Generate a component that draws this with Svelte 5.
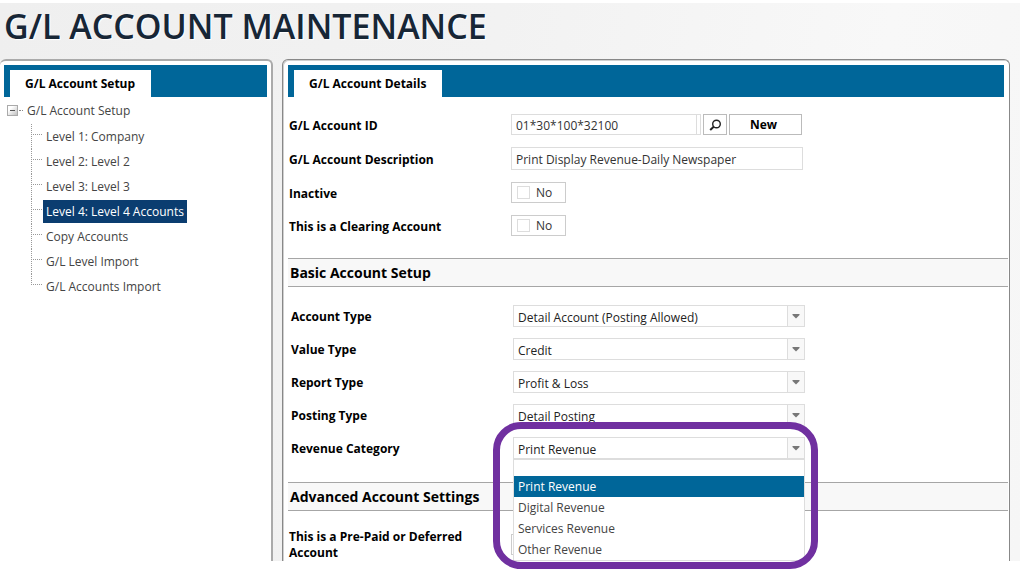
<script>
  const treeItems = [
    'Level 1: Company',
    'Level 2: Level 2',
    'Level 3: Level 3',
    'Level 4: Level 4 Accounts',
    'Copy Accounts',
    'G/L Level Import',
    'G/L Accounts Import'
  ];
  let activeItem = $state('Level 4: Level 4 Accounts');

  let accountId = $state('01*30*100*32100');
  let description = $state('Print Display Revenue-Daily Newspaper');
  let inactive = $state(false);
  let clearing = $state(false);
  let prepaid = $state(false);

  const selects = [
    { id: 'account-type', label: 'Account Type', options: ['Detail Account (Posting Allowed)'] },
    { id: 'value-type', label: 'Value Type', options: ['Credit', 'Debit'] },
    { id: 'report-type', label: 'Report Type', options: ['Profit & Loss', 'Balance Sheet'] },
    { id: 'posting-type', label: 'Posting Type', options: ['Detail Posting', 'Summary Posting'] }
  ];

  const categories = ['Print Revenue', 'Digital Revenue', 'Services Revenue', 'Other Revenue'];
  let category = $state('Print Revenue');
</script>

{#snippet arrow()}
  <span class="arrow" aria-hidden="true">
    <svg width="8" height="5" viewBox="0 0 8 5"><path d="M0.5 0h7v1L4 4.5 0.5 1z" fill="#777" /></svg>
  </span>
{/snippet}

<main class="screen">
  <h1>G/L ACCOUNT MAINTENANCE</h1>

  <div class="panels">
    <section class="panel side">
      <div class="band"><h2 class="tab">G/L Account Setup</h2></div>
      <nav class="tree">
        <div class="root">
          <button class="toggle" aria-label="Collapse">
            <svg width="12" height="12" viewBox="0 0 12 12">
              <defs>
                <linearGradient id="toggle-fill" x1="0" y1="0" x2="1" y2="1">
                  <stop offset="0.3" stop-color="#fff" /><stop offset="1" stop-color="#bbb" />
                </linearGradient>
              </defs>
              <rect x="0.5" y="0.5" width="10" height="10" fill="url(#toggle-fill)" stroke="#aaa" />
              <path d="M3 5.5h5" stroke="#555" />
            </svg>
          </button>
          <span class="dots"></span>
          <a href="#setup">G/L Account Setup</a>
        </div>
        <ul>
          {#each treeItems as item}
            <li>
              <a href="#item" class:active={item === activeItem} onclick={() => (activeItem = item)}>{item}</a>
            </li>
          {/each}
        </ul>
      </nav>
    </section>

    <section class="panel details">
      <div class="band"><h2 class="tab">G/L Account Details</h2></div>

      <div class="fields general">
        <div class="row">
          <label for="account-id">G/L Account ID</label>
          <div class="control lookup">
            <div class="id-box"><input id="account-id" type="text" bind:value={accountId} /></div>
            <button class="search" aria-label="Search">
              <svg width="13" height="12" viewBox="0 0 13 12" fill="none" stroke="#222">
                <circle cx="7.5" cy="5" r="3.8" stroke-width="1.4" />
                <path d="M4.7 7.8 1.2 11" stroke-width="2" />
              </svg>
            </button>
            <button class="new">New</button>
          </div>
        </div>
        <div class="row">
          <label for="description">G/L Account Description</label>
          <div class="control"><input id="description" class="description" type="text" bind:value={description} /></div>
        </div>
        <div class="row">
          <label for="inactive">Inactive</label>
          <label class="check"><input id="inactive" type="checkbox" bind:checked={inactive} />{inactive ? 'Yes' : 'No'}</label>
        </div>
        <div class="row">
          <label for="clearing">This is a Clearing Account</label>
          <label class="check"><input id="clearing" type="checkbox" bind:checked={clearing} />{clearing ? 'Yes' : 'No'}</label>
        </div>
      </div>

      <h3>Basic Account Setup</h3>
      <div class="fields basic">
        {#each selects as field}
          <div class="row">
            <label for={field.id}>{field.label}</label>
            <div class="control combo">
              <select id={field.id}>
                {#each field.options as option}<option>{option}</option>{/each}
              </select>
              {@render arrow()}
            </div>
          </div>
        {/each}
        <div class="row">
          <label for="category">Revenue Category</label>
          <div class="control combo">
            <select id="category" bind:value={category}>
              {#each categories as option}<option>{option}</option>{/each}
            </select>
            {@render arrow()}
            <ul class="menu" role="listbox" aria-label="Revenue Category">
              {#each categories as option}
                <li role="option" aria-selected={option === category}>{option}</li>
              {/each}
            </ul>
            <div class="highlight"></div>
          </div>
        </div>
      </div>

      <h3>Advanced Account Settings</h3>
      <div class="fields advanced">
        <div class="row">
          <label for="prepaid">This is a Pre-Paid or Deferred Account</label>
          <span class="check"><input id="prepaid" type="checkbox" bind:checked={prepaid} /></span>
        </div>
      </div>
    </section>
  </div>
</main>

<style>
  :global(body) {
    background: #fff;
  }
  .screen,
  .screen * {
    box-sizing: border-box;
  }
  .screen {
    margin: 3px 3px 16px 0;
    background: linear-gradient(100deg, #efefef 0%, #f2f2f2 45%, #f8f8f8 80%, #f6f6f6 100%);
    font: 12px/16px 'Open Sans', 'Noto Sans', sans-serif;
    color: #000;
  }
  h1,
  h2,
  h3,
  ul {
    margin: 0;
    padding: 0;
    list-style: none;
  }
  h1 {
    padding: 0 4px 9px;
    font-size: 34px;
    line-height: 47px;
    font-weight: 600;
    color: #172636;
    text-shadow: 1px 1px 1px #fff;
  }
  .panels {
    display: grid;
    grid-template-columns: 273px minmax(0, 1fr);
    gap: 9px;
    padding-right: 10px;
  }
  .panel {
    background: #fff;
    border: 2px solid #aaa;
    border-bottom: 0;
    border-radius: 6px 6px 0 0;
    padding-top: 4px;
  }
  .side {
    border-left: 0;
    padding-left: 4px;
    padding-right: 4px;
  }
  .details {
    padding: 5px 1px 0 5px;
    border-width: 1px;
    border-color: #888;
    box-shadow: inset 1px 1px 0 #d0d0d0;
  }
  .band {
    display: flex;
    align-items: flex-end;
    height: 32px;
    padding-left: 6px;
    background: #069;
  }
  .details .band {
    margin-right: 4px;
  }
  .tab {
    padding: 0 16px 0 15px;
    background: #fff;
    font-size: 12px;
    line-height: 27px;
    font-weight: 700;
  }
  .tree a {
    color: #444;
    text-decoration: none;
  }
  .root {
    display: flex;
    align-items: center;
    height: 27px;
    padding-left: 3px;
  }
  .toggle {
    display: flex;
    padding: 0;
    border: 0;
    background: none;
  }
  .dots {
    width: 4px;
    margin-right: 4px;
    border-top: 1px dotted #888;
  }
  .tree ul {
    padding-left: 27px;
  }
  .tree li {
    display: flex;
    align-items: center;
    height: 25px;
    background:
      repeating-linear-gradient(#999 0 1px, transparent 1px 2px) 0 0 / 1px 100% no-repeat,
      repeating-linear-gradient(90deg, #999 0 1px, transparent 1px 2px) 0 10px / 11px 1px no-repeat;
  }
  .tree li:last-child {
    background-size: 1px 10px, 11px 1px;
  }
  .tree li a {
    margin-left: 12px;
    padding: 0 3px;
    line-height: 23px;
  }
  .tree li a.active {
    background: #0b3d70;
    color: #fff;
  }
  .fields {
    display: grid;
  }
  .row {
    display: grid;
    grid-template-columns: 222px minmax(0, 292px);
    align-items: center;
  }
  .row > label:first-child {
    max-width: 200px;
    padding-top: 2px;
    font-weight: 700;
  }
  .general {
    gap: 12px;
    padding: 17px 0 22px 1px;
  }
  .basic {
    gap: 11px;
    padding: 18px 0 23px 3px;
  }
  .advanced {
    padding: 16px 0 0 1px;
  }
  h3 {
    padding: 1px 0 0 2px;
    border-top: 1px solid #a6a6a6;
    border-bottom: 1px solid #a6a6a6;
    background: #f8f8f8;
    font-size: 14px;
    line-height: 26px;
    font-weight: 700;
  }
  input,
  select,
  button {
    font: inherit;
    color: #333;
    border-radius: 0;
  }
  input[type='text'] {
    width: 100%;
    height: 21px;
    padding: 2px 4px 0;
    border: 1px solid #ddd;
    background: #fff;
  }
  input.description {
    height: 23px;
    display: block;
  }
  .lookup {
    display: flex;
    gap: 2px;
    padding-right: 1px;
  }
  .id-box {
    display: flex;
    flex: 1;
    padding-right: 3px;
    border: solid #ddd;
    border-width: 0 1px 0 0;
    background: linear-gradient(#ddd, #ddd) 0 0 / 100% 1px no-repeat, linear-gradient(#ddd, #ddd) 0 100% / 100% 1px no-repeat;
  }
  .lookup button {
    display: flex;
    align-items: center;
    justify-content: center;
    height: 21px;
    padding: 0;
    border: 1px solid #bbb;
    background: #fff;
  }
  .search {
    width: 24px;
  }
  .lookup .new {
    width: 73px;
    padding-right: 4px;
    color: #000;
    font-weight: 700;
  }
  .check {
    display: flex;
    align-items: center;
    justify-self: start;
    gap: 6px;
    width: 55px;
    height: 21px;
    padding-left: 5px;
    border: 1px solid #ccc;
    background: #fff;
    color: #333;
  }
  .check input {
    appearance: none;
    width: 13px;
    height: 13px;
    margin: 0;
    border: 1px solid #ddd;
  }
  .check input:checked {
    background: #069;
  }
  .combo {
    position: relative;
  }
  select {
    display: block;
    appearance: none;
    width: 100%;
    height: 22px;
    padding: 3px 20px 0 4px;
    border: 1px solid #ddd;
    background: #fff;
    color: #222;
  }
  .arrow {
    position: absolute;
    top: 1px;
    right: 1px;
    bottom: 1px;
    width: 17px;
    display: flex;
    align-items: center;
    justify-content: center;
    border-left: 1px solid #ddd;
    background: #f8f8f8;
    pointer-events: none;
  }
  .menu {
    position: absolute;
    z-index: 1;
    top: 100%;
    left: 0;
    right: 0;
    padding-top: 16px;
    border: 1px solid #ddd;
    background: #fff;
    color: #444;
    line-height: 21px;
  }
  .menu li {
    padding: 0 4px;
  }
  .menu li[aria-selected='true'] {
    background: #069;
    color: #fff;
  }
  .highlight {
    position: absolute;
    z-index: 2;
    inset: -15px -13px -110px -20px;
    border: 7px solid #7030a0;
    border-radius: 28px;
    pointer-events: none;
  }
</style>
